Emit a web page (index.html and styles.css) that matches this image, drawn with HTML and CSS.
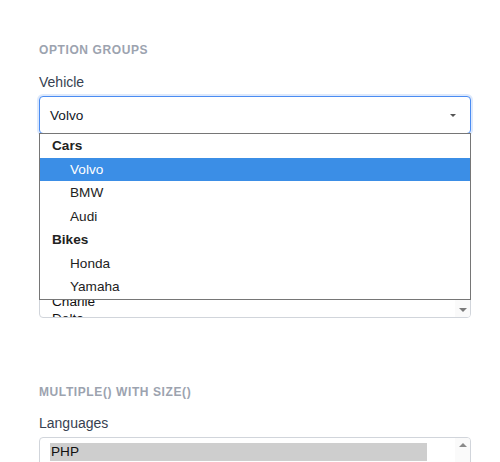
FILE: index.html
```html
<!DOCTYPE html>
<html lang="en">
<head>
<meta charset="utf-8">
<title>Selects</title>
<link rel="stylesheet" href="styles.css">
</head>
<body>
<div class="page">
  <section class="group">
    <h2 class="group-title">Option groups</h2>
    <label class="field-label">Vehicle</label>
    <div class="select-wrap">
      <div class="select is-focused">
        <span class="select-value">Volvo</span>
        <span class="caret"></span>
      </div>
      <div class="popup">
        <div class="popup-group">Cars</div>
        <div class="popup-opt is-active">Volvo</div>
        <div class="popup-opt">BMW</div>
        <div class="popup-opt">Audi</div>
        <div class="popup-group">Bikes</div>
        <div class="popup-opt">Honda</div>
        <div class="popup-opt">Yamaha</div>
      </div>
    </div>
  </section>

  <section class="group group-size">
    <h2 class="group-title">Size()</h2>
    <label class="field-label">Callsign</label>
    <div class="listbox listbox-short">
      <div class="listbox-items items-short">
        <div class="lb-opt">Alpha</div>
        <div class="lb-opt">Bravo</div>
        <div class="lb-opt">Charlie</div>
        <div class="lb-opt">Delta</div>
      </div>
      <div class="scrollbar">
        <span class="sb-btn"><span class="arrow-up"></span></span>
        <span class="sb-btn"><span class="arrow-down"></span></span>
      </div>
    </div>
  </section>

  <section class="group group-multi">
    <h2 class="group-title">Multiple() with size()</h2>
    <label class="field-label label-multi">Languages</label>
    <div class="listbox listbox-tall">
      <div class="listbox-items items-tight">
        <div class="lb-opt is-selected">PHP</div>
        <div class="lb-opt">JavaScript</div>
        <div class="lb-opt">Python</div>
        <div class="lb-opt">Ruby</div>
      </div>
      <div class="scrollbar">
        <span class="sb-btn"><span class="arrow-up"></span></span>
        <span class="sb-btn"><span class="arrow-down"></span></span>
      </div>
    </div>
  </section>
</div>
</body>
</html>
```

FILE: styles.css
```css
html, body {
  margin: 0;
  padding: 0;
  overflow: hidden;
  background: #ffffff;
}

body {
  font-family: "Liberation Sans", Arial, sans-serif;
}

.page {
  padding: 42px 29px 0 39px;
}

.group-size {
  margin-top: 67px;
}

.group-multi {
  margin-top: 66px;
}

.group-title {
  margin: 0 0 14px;
  font-size: 12px;
  line-height: 16px;
  font-weight: 700;
  letter-spacing: 0.05em;
  text-transform: uppercase;
  color: #9ca3af;
}

.field-label {
  display: block;
  font-size: 14px;
  line-height: 20px;
  color: #374151;
  margin-bottom: 4px;
}

.group-multi .group-title {
  margin-bottom: 13px;
}

.select-wrap {
  position: relative;
}

.select {
  box-sizing: border-box;
  height: 38px;
  display: flex;
  align-items: center;
  justify-content: space-between;
  padding: 0 14px 0 10px;
  border: 1px solid #d1d5db;
  border-radius: 4px;
  background: #ffffff;
  font-size: 13.6px;
  color: #111827;
}

.select.is-focused {
  border-color: #4a8cf2;
  box-shadow: 0 0 0 2px #dde9fc;
}

.caret {
  width: 0;
  height: 0;
  border-left: 3px solid transparent;
  border-right: 3px solid transparent;
  border-top: 3px solid #555555;
}

.popup {
  position: absolute;
  left: 0;
  right: 0;
  top: 37px;
  z-index: 10;
  box-sizing: border-box;
  height: 166.5px;
  overflow: hidden;
  background: #ffffff;
  border: 1px solid #767676;
  font-size: 13.6px;
  color: #222222;
}

.popup-group,
.popup-opt {
  height: 23.5px;
  line-height: 23.5px;
  white-space: nowrap;
}

.popup-group {
  padding-left: 12px;
  font-weight: 700;
}

.popup-opt {
  padding-left: 30px;
}

.popup-opt.is-active {
  background: #3b8ee6;
  color: #ffffff;
}

.listbox {
  box-sizing: border-box;
  display: flex;
  border: 1px solid #d1d5db;
  border-radius: 4px;
  background: #ffffff;
  overflow: hidden;
  font-size: 13.6px;
  color: #111111;
}

.listbox-short {
  height: 63px;
}

.listbox-tall {
  height: 90px;
}

.listbox-items {
  flex: 1;
  padding: 5px 28px 0 10px;
  overflow: hidden;
}

.items-short {
  padding-top: 3px;
}

.lb-opt {
  height: 17px;
  line-height: 17px;
  padding-left: 2px;
  white-space: nowrap;
}

.items-tight .lb-opt {
  padding-left: 1px;
}

.lb-opt.is-selected {
  background: #cecece;
  height: 18px;
  line-height: 18px;
}

.scrollbar {
  width: 15px;
  display: flex;
  flex-direction: column;
  justify-content: space-between;
  background: #fafafa;
}

.sb-btn {
  height: 14px;
  display: flex;
  align-items: center;
  justify-content: center;
}

.arrow-up {
  width: 0;
  height: 0;
  border-left: 4px solid transparent;
  border-right: 4px solid transparent;
  border-bottom: 4px solid #8a8a8a;
}

.arrow-down {
  width: 0;
  height: 0;
  border-left: 4px solid transparent;
  border-right: 4px solid transparent;
  border-top: 4px solid #7a7a7a;
}
```
